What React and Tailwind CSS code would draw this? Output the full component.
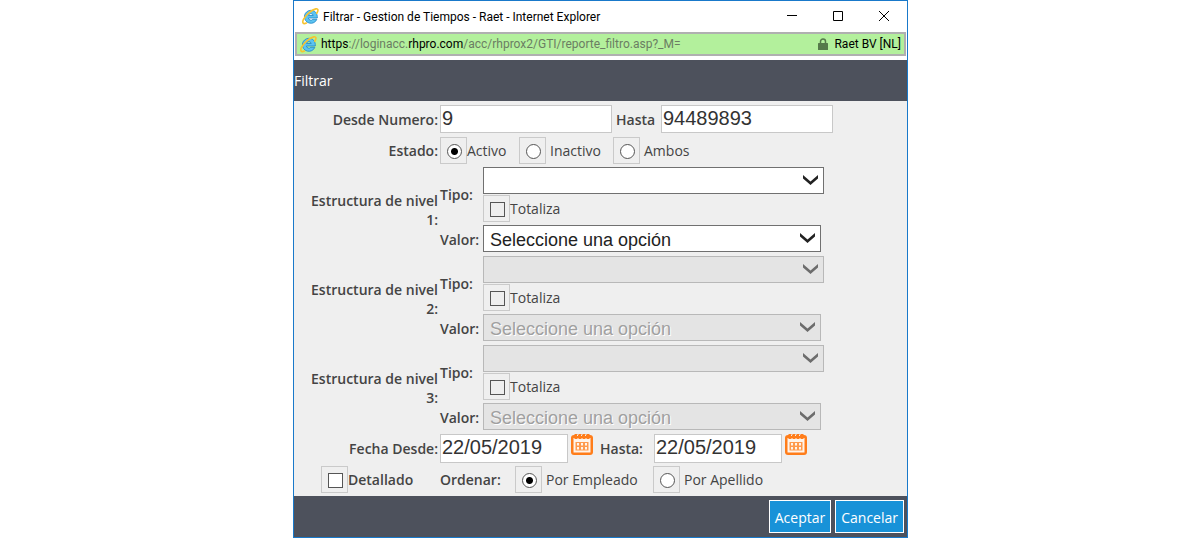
import { useState } from 'react';

const estados = ['Activo', 'Inactivo', 'Ambos'];
const niveles = [1, 2, 3];

const IeLogo = () => (
  <svg viewBox="0 0 17 17" className="w-[17px] h-[17px] shrink-0" aria-hidden="true">
    <path
      d="M8.800 2.300a6.500 6.500 0 1 0 6.100 9h-4.100a2.500 2.500 0 0 1-4.400-1.300h8.900c.4-4.400-2.300-7.700-6.500-7.700Z M6.500 7.500a2.400 2.400 0 0 1 4.700 0Z"
      fill="#5cc3f0"
      stroke="#1f86c8"
      strokeWidth="0.8"
      fillRule="evenodd"
    />
    <path
      d="M14.800 5.200C16.700 2.200 16.200.4 13.800.9 10 1.700 4 6.500 1.600 11.200c-1.700 3.400-.6 5.400 2.800 3.900"
      fill="none"
      stroke="#f7c32e"
      strokeWidth="1.600"
      strokeLinecap="round"
    />
  </svg>
);

const LockIcon = () => (
  <svg viewBox="0 0 10 12" className="w-2.5 h-3 mr-0.5 shrink-0" aria-hidden="true">
    <path d="M2.500 6V3.500a2.500 2.500 0 0 1 5 0V6" fill="none" stroke="#557a4a" strokeWidth="1.500" />
    <rect y="5" width="10" height="7" rx="0.5" fill="#557a4a" />
  </svg>
);

const CalendarIcon = () => (
  <svg viewBox="0 0 22 21" className="w-[22px] h-[21px]" aria-hidden="true">
    <rect y="1" width="22" height="20" rx="3" fill="#ff7d1a" />
    <path d="M2.500 4h17v14.500h-17z" fill="#fff4ea" />
    <path d="M3.500 0h3v5h-3zM7.500 0h3v5h-3zM11.500 0h3v5h-3zM15.500 0h3v5h-3z" fill="#ff7d1a" />
    <path d="M6.500 1v1M10.500 1v1M14.500 1v1" stroke="#efefef" />
    <path d="M4.500 8h13v8.500h-13z" fill="#ff9a4d" />
    <path d="M6 9h2v2.500H6zM10 9h2v2.500h-2zM14 9h2v2.500h-2zM6 13h2v2.500H6zM10 13h2v2.500h-2zM14 13h2v2.500h-2z" fill="#fff4ea" />
  </svg>
);

const Box = ({ children }) => (
  <span className="w-[27px] h-[27px] shrink-0 border border-[#cacaca] flex items-center justify-center">
    {children}
  </span>
);

const Radio = ({ id, name, checked, onChange }) => (
  <Box>
    <input
      type="radio"
      id={id}
      name={name}
      checked={checked}
      onChange={onChange}
      className="appearance-none w-[15px] h-[15px] ml-0.5 mt-0.5 rounded-full border border-[#555] bg-white checked:bg-[radial-gradient(circle,#000_3px,#fff_4px)]"
    />
  </Box>
);

const Check = ({ id, white }) => (
  <Box>
    <input
      type="checkbox"
      id={id}
      className={`appearance-none w-[15px] h-[15px] ml-0.5 mt-0.5 border border-[#555] checked:bg-[#444] ${white ? 'bg-white' : 'bg-[#eee]'}`}
    />
  </Box>
);

const SelectBox = ({ id, disabled, width, children }) => (
  <div className={`relative h-[27px] ${width}`}>
    <select
      id={id}
      disabled={disabled}
      className="appearance-none w-full h-full pl-1.5 pr-8 pt-0.5 border border-[#707070] bg-white text-lg leading-6 text-[#222] font-['Liberation_Sans',sans-serif] disabled:bg-[#e4e4e4] disabled:border-[#b8b8b8] disabled:text-[#a0a0a0] disabled:opacity-100 disabled:[text-shadow:1px_1px_0_#fff]"
    >
      {children}
    </select>
    <svg viewBox="0 0 15 10" className="absolute right-1.5 top-2 w-[15px] h-2.5 pointer-events-none" aria-hidden="true">
      <path d="M0 0l7.500 6.500L15 0v3.500L7.500 10 0 3.500z" fill={disabled ? '#6c6c6c' : '#222'} />
    </svg>
  </div>
);

const inputClass =
  "border border-[#c8c8c8] bg-white pl-px pb-0.5 text-xl leading-6 text-[#333] font-['Liberation_Sans',sans-serif] outline-none";

const Nivel = ({ nivel, disabled }) => (
  <div className="flex gap-0.5">
    <div className="w-36 shrink-0 flex items-center justify-end text-right font-semibold">
      Estructura de nivel<br />{nivel}:
    </div>
    <div className="grow grid grid-cols-[41px_1fr] gap-x-0.5 gap-y-[3px]">
      <label htmlFor={`tipo-${nivel}`} className="font-semibold self-center">Tipo:</label>
      <div>
        <SelectBox id={`tipo-${nivel}`} disabled={disabled} width="max-w-[341px]">
          <option></option>
        </SelectBox>
        <div className="h-7 flex items-center">
          <Check id={`totaliza-${nivel}`} />
          <label htmlFor={`totaliza-${nivel}`}>Totaliza</label>
        </div>
      </div>
      <label htmlFor={`valor-${nivel}`} className="h-7 pt-[5px] font-semibold">Valor:</label>
      <SelectBox id={`valor-${nivel}`} disabled={disabled} width="max-w-[338px]">
        <option>Seleccione una opción</option>
      </SelectBox>
    </div>
  </div>
);

const App = () => {
  const [estado, setEstado] = useState('Activo');
  const [orden, setOrden] = useState('empleado');
  const [desde, setDesde] = useState('9');
  const [hasta, setHasta] = useState('94489893');
  const [fechaDesde, setFechaDesde] = useState('22/05/2019');
  const [fechaHasta, setFechaHasta] = useState('22/05/2019');

  return (
    <div className="bg-white pl-0.5">
      <div className="max-w-[615px] mx-auto border border-[#1979ca] text-sm leading-[19px] text-[#444] font-['Open_Sans',sans-serif]">
        {/* Title bar */}
        <div className="h-[31px] flex items-center pl-2 pr-[17px] gap-1 text-xs text-black font-['Roboto',sans-serif]">
          <IeLogo />
          <span className="grow">Filtrar - Gestion de Tiempos - Raet - Internet Explorer</span>
          <div className="flex gap-[34px]">
            <button aria-label="Minimizar" className="w-3 h-3">
              <svg viewBox="0 0 12 12" className="w-3 h-3"><path d="M1 4.500h10" stroke="#000" /></svg>
            </button>
            <button aria-label="Maximizar" className="w-3 h-3">
              <svg viewBox="0 0 12 12" className="w-3 h-3"><path d="M1.500.5h9v9h-9z" fill="none" stroke="#000" /></svg>
            </button>
            <button aria-label="Cerrar" className="w-3 h-3">
              <svg viewBox="0 0 12 12" className="w-3 h-3"><path d="M1 0l10 10M11 0L1 10" stroke="#000" /></svg>
            </button>
          </div>
        </div>

        {/* Address bar */}
        <div className="h-6 ml-px mr-px mb-1 flex items-center gap-1 px-[3px] border-2 border-[#b0b0b0] bg-[#b3f09c] text-xs text-black font-['Roboto',sans-serif]">
          <IeLogo />
          <span className="grow text-[#6b7d63]">
            <span className="text-black">https</span>://loginacc.<span className="text-black">rhpro.com</span>/acc/rhprox2/GTI/reporte_filtro.asp?_M=
          </span>
          <LockIcon />
          <span>Raet BV [NL]</span>
        </div>

        <h1 className="h-[41px] flex items-center bg-[#4d515c] text-white text-sm">Filtrar</h1>

        <form className="bg-[#efefef]" onSubmit={(e) => e.preventDefault()}>
          <div className="flex flex-col gap-[3px] pt-1 pb-[3px]">
            <div className="flex items-center gap-0.5">
              <label htmlFor="desde" className="w-36 text-right font-semibold">Desde Numero:</label>
              <input id="desde" value={desde} onChange={(e) => setDesde(e.target.value)} className={`w-[172px] h-7 ${inputClass}`} />
              <label htmlFor="hasta" className="w-[45px] pl-0.5 font-semibold">Hasta</label>
              <input id="hasta" value={hasta} onChange={(e) => setHasta(e.target.value)} className={`w-[172px] h-7 ${inputClass}`} />
            </div>

            <div className="h-7 flex items-end gap-0.5">
              <span className="w-36 pb-1 text-right font-semibold">Estado:</span>
              {estados.map((item, index) => (
                <div key={item} className={`flex items-center ${index === 0 ? 'w-[77px]' : 'w-[92px] gap-1'}`}>
                  <Radio id={item} name="estado" checked={estado === item} onChange={() => setEstado(item)} />
                  <label htmlFor={item}>{item}</label>
                </div>
              ))}
            </div>

            {niveles.map((nivel) => (
              <Nivel key={nivel} nivel={nivel} disabled={nivel > 1} />
            ))}

            <div className="flex items-center gap-0.5">
              <label htmlFor="fecha-desde" className="w-36 text-right font-semibold">Fecha Desde:</label>
              <input id="fecha-desde" value={fechaDesde} onChange={(e) => setFechaDesde(e.target.value)} className={`w-32 h-[29px] ${inputClass}`} />
              <button type="button" aria-label="Calendario desde" className="self-start ml-px"><CalendarIcon /></button>
              <label htmlFor="fecha-hasta" className="w-[57px] pl-[5px] font-semibold">Hasta:</label>
              <input id="fecha-hasta" value={fechaHasta} onChange={(e) => setFechaHasta(e.target.value)} className={`w-32 h-[29px] ${inputClass}`} />
              <button type="button" aria-label="Calendario hasta" className="self-start ml-px"><CalendarIcon /></button>
            </div>

            <div className="flex items-center">
              <div className="w-[146px] pl-[27px] flex items-center">
                <Check id="detallado" white />
                <label htmlFor="detallado" className="font-semibold">Detallado</label>
              </div>
              <span className="w-[75px] font-semibold">Ordenar:</span>
              <div className="w-[138px] flex items-center gap-1">
                <Radio id="empleado" name="orden" checked={orden === 'empleado'} onChange={() => setOrden('empleado')} />
                <label htmlFor="empleado">Por Empleado</label>
              </div>
              <div className="flex items-center gap-1">
                <Radio id="apellido" name="orden" checked={orden === 'apellido'} onChange={() => setOrden('apellido')} />
                <label htmlFor="apellido">Por Apellido</label>
              </div>
            </div>
          </div>

          {/* Footer buttons */}
          <div className="h-[41px] px-[3px] flex items-center justify-end gap-1 bg-[#4d515c] text-white">
            <button type="submit" className="h-[33px] px-[5px] pt-0.5 border border-white bg-[#1892d8]">Aceptar</button>
            <button type="button" className="h-[33px] px-[5px] pt-0.5 border border-white bg-[#1892d8]">Cancelar</button>
          </div>
        </form>
      </div>
    </div>
  );
};

export default App;
